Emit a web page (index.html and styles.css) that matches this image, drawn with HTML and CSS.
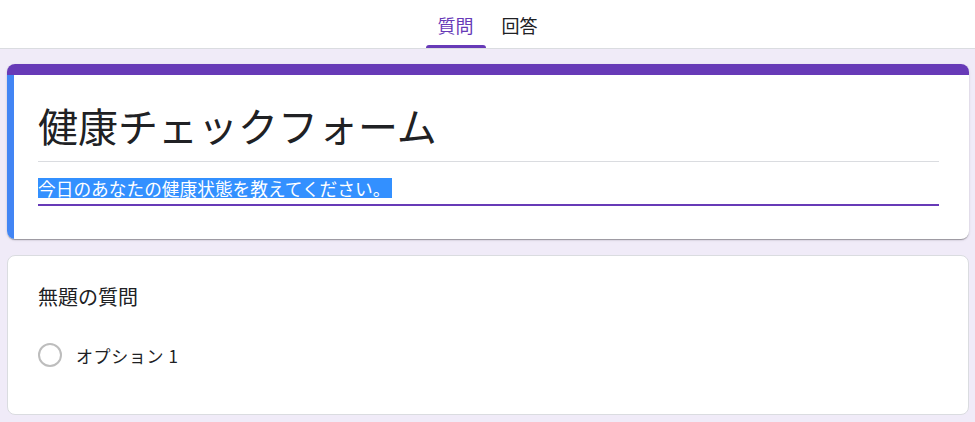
FILE: index.html
```html
<!DOCTYPE html>
<html lang="ja">
<head>
<meta charset="utf-8">
<title>健康チェックフォーム</title>
<link rel="stylesheet" href="styles.css">
</head>
<body>
<header class="topbar">
  <nav class="tabs">
    <div class="tab active">質問</div>
    <div class="tab">回答</div>
  </nav>
</header>
<main class="page">
  <section class="card title-card">
    <div class="card-accent"></div>
    <div class="card-body">
      <div class="form-title">健康チェックフォーム</div>
      <div class="form-desc"><span class="selected">今日のあなたの健康状態を教えてください。</span></div>
    </div>
  </section>
  <section class="card question-card">
    <div class="question-title">無題の質問</div>
    <div class="option">
      <span class="radio"></span>
      <span class="option-label">オプション 1</span>
    </div>
  </section>
</main>
</body>
</html>
```
FILE: styles.css
```css
html, body {
  margin: 0;
  padding: 0;
}
body {
  background: #f0ebf8;
  font-family: "Noto Sans CJK JP", "Noto Sans", sans-serif;
  color: #202124;
}
.topbar {
  height: 48px;
  background: #ffffff;
  border-bottom: 1px solid #dadce0;
  display: flex;
  justify-content: center;
}
.tabs {
  display: flex;
  gap: 4px;
  height: 48px;
}
.tab {
  position: relative;
  height: 48px;
  line-height: 50px;
  padding: 0 12px;
  font-size: 18px;
  color: #202124;
}
.tab.active {
  color: #673ab7;
}
.tab.active::after {
  content: "";
  position: absolute;
  left: 0;
  right: 0;
  bottom: 0;
  height: 3px;
  background: #673ab7;
  border-radius: 3px 3px 0 0;
}
.page {
  padding: 15px 6px 7px 7px;
  display: flex;
  flex-direction: column;
  gap: 16px;
}
.card {
  background: #ffffff;
  border-radius: 8px;
}
.title-card {
  overflow: hidden;
  box-shadow: 0 2px 1px -1px rgba(0,0,0,0.2), 0 1px 1px 0 rgba(0,0,0,0.14), 0 1px 3px 0 rgba(0,0,0,0.12);
}
.card-accent {
  height: 11px;
  background: #673ab7;
}
.card-body {
  border-left: 7px solid #4285f4;
  padding: 26px 30px 33px 24px;
}
.form-title {
  font-size: 40px;
  line-height: 48px;
  padding-bottom: 12px;
  border-bottom: 1px solid #dadce0;
  color: #202124;
}
.form-desc {
  margin-top: 16px;
  padding-bottom: 6px;
  border-bottom: 2px solid #673ab7;
  line-height: 20px;
  height: 20px;
}
.selected {
  display: inline-block;
  height: 20px;
  line-height: 20px;
  font-size: 17.7px;
  background: #3390ff;
  color: #ffffff;
  padding-right: 2px;
}
.question-card {
  border: 1px solid #dadce0;
  padding: 27px 30px 35px 30px;
}
.question-title {
  font-size: 20px;
  line-height: 28px;
}
.option {
  margin-top: 20px;
  height: 48px;
  display: flex;
  align-items: center;
  gap: 14px;
}
.radio {
  width: 20px;
  height: 20px;
  border: 2px solid #bdbdbd;
  border-radius: 50%;
  flex: none;
}
.option-label {
  font-size: 17px;
  letter-spacing: 0.6px;
  color: #202124;
}
```
